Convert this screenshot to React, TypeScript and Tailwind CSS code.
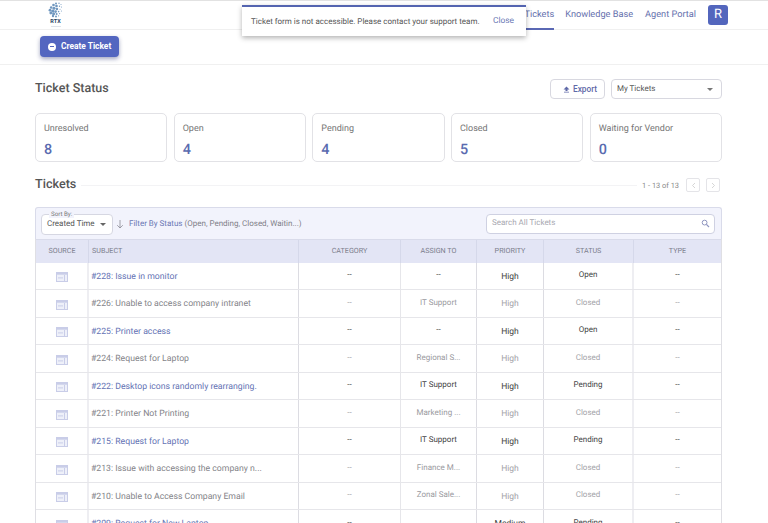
import React from "react";

const font = { fontFamily: 'Roboto, "Liberation Sans", sans-serif' };

type Row = { s: string; c: string; a: string; p: string; st: string; t: string; open: boolean };
const rows: Row[] = [
  { s: "#228: Issue in monitor", c: "--", a: "--", p: "High", st: "Open", t: "--", open: true },
  { s: "#226: Unable to access company intranet", c: "--", a: "IT Support", p: "High", st: "Closed", t: "--", open: false },
  { s: "#225: Printer access", c: "--", a: "--", p: "High", st: "Open", t: "--", open: true },
  { s: "#224: Request for Laptop", c: "--", a: "Regional S...", p: "High", st: "Closed", t: "--", open: false },
  { s: "#222: Desktop icons randomly rearranging.", c: "--", a: "IT Support", p: "High", st: "Pending", t: "--", open: true },
  { s: "#221: Printer Not Printing", c: "--", a: "Marketing ...", p: "High", st: "Closed", t: "--", open: false },
  { s: "#215: Request for Laptop", c: "--", a: "IT Support", p: "High", st: "Pending", t: "--", open: true },
  { s: "#213: Issue with accessing the company n...", c: "--", a: "Finance M...", p: "High", st: "Closed", t: "--", open: false },
  { s: "#210: Unable to Access Company Email", c: "--", a: "Zonal Sale...", p: "High", st: "Closed", t: "--", open: false },
  { s: "#209: Request for New Laptop", c: "--", a: "", p: "Medium", st: "Pending", t: "--", open: true },
];

const cards = [
  ["Unresolved", "8"],
  ["Open", "4"],
  ["Pending", "4"],
  ["Closed", "5"],
  ["Waiting for Vendor", "0"],
];

function SourceIcon() {
  return (
    <svg width="12" height="10" viewBox="0 0 12 10" className="block">
      <rect x="0.5" y="0.5" width="11" height="9" fill="#eef0f9" stroke="#c9cde8" />
      <rect x="0.5" y="0.5" width="11" height="2.2" fill="#c9cde8" />
      <rect x="2" y="5.4" width="5" height="1" fill="#c9cde8" />
      <rect x="8" y="3" width="1" height="6" fill="#c9cde8" />
    </svg>
  );
}

function Logo() {
  const dots = [
    [8, 1.5, 1], [11, 1.2, 0.7], [13, 2.5, 0.5], [5.5, 3, 1.3], [8.5, 4, 1.3], [11.5, 4.2, 0.7], [13.5, 5, 0.5],
    [3.2, 5.5, 1.3], [6, 6.2, 1.5], [9, 7, 1.2], [12, 7.2, 0.5], [2, 8.2, 1.4], [4.8, 9, 1.6], [7.6, 9.6, 1.3], [10.6, 9.6, 0.8], [13.4, 9, 0.5],
    [2.8, 11, 1.4], [5.6, 11.8, 1.5], [8.6, 12, 1], [11.6, 11.6, 0.6], [5, 14, 1.2], [8, 14.4, 1], [10.6, 13.8, 0.6],
  ];
  return (
    <div className="flex flex-col items-center w-[15px]">
      <svg width="15" height="16" viewBox="0 0 15 16" className="block">
        {dots.map((d, i) => (
          <circle key={i} cx={d[0]} cy={d[1]} r={d[2]} fill="#7097bf" />
        ))}
      </svg>
      <span className="text-[5.5px] leading-[6px] font-bold text-[#27415f] mt-[1px]">RTX</span>
      <span className="block w-[10px] h-px bg-[#dfe3ea] mt-[1px]" />
    </div>
  );
}

function Th({ children, w, align = "center" }: { children: React.ReactNode; w: string; align?: string }) {
  return (
    <div className={`${w} shrink-0 h-full flex items-center border-r border-[#d5d8ea] text-[7.2px] text-[#7b7d8c] ${align === "left" ? "justify-start pl-[3px]" : "justify-center"}`}>
      {children}
    </div>
  );
}

export default function App() {
  return (
    <div style={font} className="relative w-[768px] h-[523px] overflow-hidden bg-white text-[#555] [text-rendering:geometricPrecision]">
      {/* Top nav */}
      <header className="h-[30px] border-t border-t-[#e2e2e2] border-b border-b-[#f0f0f0] flex items-center justify-between pl-[48px] pr-[40px]">
        <div className="self-start pt-[1px]"><Logo /></div>
        <nav className="flex items-center h-full text-[9.2px] text-[#6570ad]">
          <span className="h-full flex items-center border-b-2 border-[#5a68b4] -mb-[1px] mr-[11px]">Tickets</span>
          <span className="mr-[12px]">Knowledge Base</span>
          <span className="mr-[12px]">Agent Portal</span>
          <span className="w-[20px] h-[20px] rounded-[3px] bg-[#5366bd] text-white text-[13px] flex items-center justify-center">R</span>
        </nav>
      </header>

      {/* Action bar */}
      <div className="h-[35px] border-b border-[#f0f0f0] pl-[40px] pt-[6px]">
        <button className="w-[79px] h-[21px] rounded-[4px] bg-[#5366c0] shadow-[0_2px_4px_rgba(50,60,120,0.45)] flex items-center pl-[8px] gap-[5px] text-white text-[8.4px] font-bold">
          <span className="w-[8px] h-[8px] rounded-full bg-white flex items-center justify-center">
            <span className="block w-[4px] h-[1px] bg-[#5366c0]" />
          </span>
          Create Ticket
        </button>
      </div>

      <main className="pl-[35px] pr-[46px]">
        {/* Status head */}
        <div className="flex items-center justify-between h-[48px]">
          <h1 className="text-[12.5px] font-medium text-[#555]">Ticket Status</h1>
          <div className="flex items-center gap-[6px]">
            <button className="w-[55px] h-[20px] rounded-[4px] border border-[#d8d8e0] flex items-center pl-[12px] gap-[3px] text-[8.3px] font-medium text-[#5f69a8]">
              <svg width="7" height="7" viewBox="0 0 7 7"><path d="M3.5 0.5 L6.5 3.5 H4.5 V5 H2.5 V3.5 H0.5 Z M1 5.8 H6 V6.6 H1 Z" fill="#5f69a8" /></svg>
              Export
            </button>
            <div className="w-[111px] h-[20px] rounded-[4px] border border-[#d8d8e0] flex items-center justify-between pl-[5px] pr-[8px] text-[8px] text-[#555]">
              My Tickets
              <span className="w-0 h-0 border-l-[3px] border-r-[3px] border-t-[3px] border-l-transparent border-r-transparent border-t-[#777]" />
            </div>
          </div>
        </div>

        {/* Cards */}
        <div className="flex gap-[6.4px]">
          {cards.map(([l, n]) => (
            <div key={l} className="flex-1 h-[49px] rounded-[5px] border border-[#e2e2e6] pl-[8px] pt-[9px]">
              <div className="text-[9px] leading-[12px] text-[#757575]">{l}</div>
              <div className="text-[14.4px] leading-[16px] font-medium text-[#5a6bb0] mt-[7px]">{n}</div>
            </div>
          ))}
        </div>

        {/* Tickets head */}
        <div className="flex items-center h-[22px] mt-[12px]">
          <h2 className="text-[12.6px] font-medium text-[#555]">Tickets</h2>
          <div className="flex-1 h-px bg-[#f3f3f5] ml-[5px] mr-[5px]" />
          <span className="text-[7.4px] text-[#888] mr-[7px] mt-[1px]">1 - 13 of 13</span>
          <span className="w-[14px] h-[14px] rounded-[2px] border border-[#e4e4e8] flex items-center justify-center mr-[6px]">
            <svg width="5" height="7" viewBox="0 0 5 7"><path d="M4 1 L1.5 3.5 L4 6" fill="none" stroke="#ccc" strokeWidth="0.8" /></svg>
          </span>
          <span className="w-[14px] h-[14px] rounded-[2px] border border-[#e4e4e8] flex items-center justify-center mr-[2px]">
            <svg width="5" height="7" viewBox="0 0 5 7"><path d="M1 1 L3.5 3.5 L1 6" fill="none" stroke="#ccc" strokeWidth="0.8" /></svg>
          </span>
        </div>

        {/* Toolbar */}
        <div className="mt-[11px] h-[32px] rounded-t-[3px] border border-[#d9dbea] border-b-0 bg-[#f2f3fc] flex items-center pl-[5px] pr-[6px]">
          <div className="relative w-[72px] h-[21px] rounded-[4px] border border-[#d6d7e2] bg-white flex items-center justify-between pl-[5px] pr-[6px] text-[8px] text-[#555] mt-[1px]">
            <span className="absolute -top-[5px] left-[7px] px-[2px] bg-[#f2f3fc] text-[6.2px] leading-[8px] text-[#777]">Sort By:</span>
            Created Time
            <span className="w-0 h-0 border-l-[3px] border-r-[3px] border-t-[3px] border-l-transparent border-r-transparent border-t-[#666]" />
          </div>
          <svg width="8" height="10" viewBox="0 0 8 10" className="ml-[3px]"><path d="M4 1 V9 M1.2 6.2 L4 9 L6.8 6.2" fill="none" stroke="#8a8a96" strokeWidth="0.8" /></svg>
          <span className="ml-[5px] text-[8px] text-[#6a77b4]">Filter By Status</span>
          <span className="ml-[2px] text-[8px] text-[#808088]">(Open, Pending, Closed, Waitin...)</span>
          <div className="ml-auto w-[229px] h-[20px] rounded-[4px] border border-[#cfd1e2] bg-white flex items-center justify-between pl-[5px] pr-[4px] pb-[1px] text-[8px] text-[#a8a8b0]">
            Search All Tickets
            <svg width="9" height="9" viewBox="0 0 9 9"><circle cx="3.6" cy="3.6" r="2.4" fill="none" stroke="#8f96c0" strokeWidth="1" /><path d="M5.4 5.4 L8 8" stroke="#8f96c0" strokeWidth="1.2" /></svg>
          </div>
        </div>

        {/* Table */}
        <div className="border-l border-r border-[#dfdfe4]">
          <div className="flex h-[23.5px] bg-[#e3e5f5] items-center border-t border-[#d9dbea]">
            <Th w="w-[53px]">SOURCE</Th>
            <Th w="w-[210px]" align="left">SUBJECT</Th>
            <Th w="w-[102px]">CATEGORY</Th>
            <Th w="w-[76px]">ASSIGN TO</Th>
            <Th w="w-[67px]">PRIORITY</Th>
            <Th w="w-[90px]">STATUS</Th>
            <div className="flex-1 text-center text-[7.2px] text-[#7b7d8c]">TYPE</div>
          </div>
          {rows.map((r) => {
            const tone = r.open ? "text-[#444]" : "text-[#a3a3a8]";
            return (
              <div key={r.s} className="flex h-[27.5px] border-b border-[#e6e6ea]">
                <div className="w-[53px] shrink-0 border-r-2 border-[#eeeef2] flex items-center justify-center pt-[3px]"><SourceIcon /></div>
                <div className={`w-[210px] shrink-0 border-r border-[#dcdce2] flex items-center pl-[2px] pt-[3px] text-[8.7px] ${r.open ? "text-[#6573b4]" : "text-[#848489]"}`}>{r.s}</div>
                <div className={`w-[102px] shrink-0 border-r border-[#e6e6ea] flex items-center justify-center pb-[1px] text-[8px] ${tone}`}>{r.c}</div>
                <div className={`w-[76px] shrink-0 border-r border-[#dcdce2] flex items-center justify-center pb-[1px] text-[8px] ${r.open ? "text-[#444]" : "text-[#9a9aa0]"}`}>{r.a}</div>
                <div className={`w-[67px] shrink-0 border-r border-[#dcdce2] flex items-center justify-center pt-[3px] text-[8.5px] ${tone}`}>{r.p}</div>
                <div className={`w-[90px] shrink-0 border-r-2 border-[#eeeef2] flex items-center justify-center pb-[1px] text-[8px] ${tone}`}>{r.st}</div>
                <div className={`flex-1 flex items-center justify-center pb-[1px] text-[8px] ${tone}`}>{r.t}</div>
              </div>
            );
          })}
        </div>
      </main>

      {/* Toast */}
      <div className="absolute left-[242px] top-[5px] w-[284px] h-[31px] bg-white border-t-2 border-[#5464b0] shadow-[0_2px_5px_rgba(0,0,0,0.3)] flex items-center justify-between pl-[9px] pr-[12px] text-[8px] text-[#555]">
        <span className="whitespace-nowrap">Ticket form is not accessible. Please contact your support team.</span>
        <span className="text-[8.4px] text-[#6a77b4]">Close</span>
      </div>
    </div>
  );
}
